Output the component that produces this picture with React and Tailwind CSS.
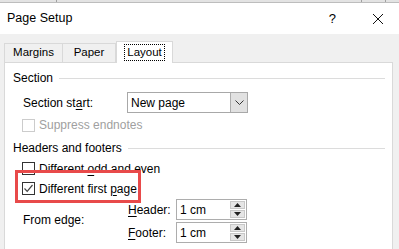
import React from "react";

const U = ({ children }) => <span className="underline underline-offset-2">{children}</span>;

function Check({ checked, disabled }) {
  return (
    <div
      className={
        "w-[13px] h-[13px] border bg-white flex items-center justify-center shrink-0 " +
        (disabled ? "border-[#cccccc]" : "border-[#333333]")
      }
    >
      {checked && (
        <svg width="11" height="11" viewBox="0 0 11 11">
          <path d="M1.5 5.5 L4.2 8.3 L9.5 2" fill="none" stroke="#444" strokeWidth="1.2" />
        </svg>
      )}
    </div>
  );
}

function Spin() {
  return (
    <div className="flex flex-col gap-[1px] mr-[1px]">
      <div className="w-[15px] h-[8px] bg-[#e5e5e5] border border-[#c8c8c8] flex items-center justify-center">
        <svg width="7" height="4" viewBox="0 0 7 4"><path d="M0 4 L3.5 0 L7 4 Z" fill="#222" /></svg>
      </div>
      <div className="w-[15px] h-[8px] bg-[#e5e5e5] border border-[#c8c8c8] flex items-center justify-center">
        <svg width="7" height="4" viewBox="0 0 7 4"><path d="M0 0 L3.5 4 L7 0 Z" fill="#222" /></svg>
      </div>
    </div>
  );
}

function SpinInput({ value }) {
  return (
    <div className="w-[71px] h-[21px] border border-[#adadad] bg-white flex items-center justify-between pl-[3px]">
      <span>{value}</span>
      <Spin />
    </div>
  );
}

export default function App() {
  return (
    <div
      className="w-[399px] h-[249px] overflow-hidden bg-[#f0f0f0] relative text-[12px] text-black leading-none"
      style={{ fontFamily: '"Liberation Sans", Arial, sans-serif' }}
    >
      {/* top strip */}
      <div className="h-[3px] bg-[#e3e3e3] border-b border-[#bdbdbd] flex">
        <div className="w-[57px] border-r border-[#a0a0a0]" />
        <div className="w-[305px] border-r border-[#a0a0a0]" />
        <div className="w-[24px] border-r border-[#a0a0a0]" />
      </div>
      {/* title bar */}
      <div className="h-[31px] bg-white flex items-center pl-[7px]">
        <span className="text-[12.5px]">Page Setup</span>
        <span className="ml-auto text-[13px] mr-[36px]">?</span>
        <svg width="12" height="12" viewBox="0 0 12 12" className="mr-[15px]">
          <path d="M1 1 L11 11 M11 1 L1 11" stroke="#111" strokeWidth="1" />
        </svg>
      </div>
      {/* tabs */}
      <div className="h-[28px] flex items-end pl-[4px] relative z-10">
        <div className="w-[59px] h-[19px] border border-b-0 border-[#d9d9d9] bg-[#f0f0f0] flex items-center justify-center text-[11.5px]">
          Margins
        </div>
        <div className="w-[53px] h-[19px] border border-b-0 border-l-0 border-[#d9d9d9] bg-[#f0f0f0] flex items-center justify-center text-[11.5px]">
          Paper
        </div>
        <div className="w-[57px] h-[22px] -mb-[1px] border border-b-0 border-[#d9d9d9] bg-white flex items-center justify-center text-[11.5px]">
          <span className="border border-dotted border-black px-[2px] py-[2px]">Layout</span>
        </div>
      </div>
      {/* panel */}
      <div className="ml-[4px] w-[389px] h-[200px] bg-white border border-[#d9d9d9] relative">
        <div className="flex items-center h-[16px] mt-[7px] pl-[8px] pr-[7px]">
          <span>Section</span>
          <div className="flex-1 h-[1px] bg-[#dcdcdc] ml-[6px]" />
        </div>
        <div className="flex items-center h-[21px] mt-[6px] pl-[18px]">
          <span className="w-[104px]">Section st<U>a</U>rt:</span>
          <div className="w-[121px] h-[21px] border border-[#a8a8a8] bg-white flex">
            <span className="flex-1 pl-[3px] flex items-center">New page</span>
            <div className="w-[17px] h-full bg-[#e1e1e1] border-l border-[#adadad] flex items-center justify-center">
              <svg width="9" height="5" viewBox="0 0 9 5"><path d="M0.5 0.5 L4.5 4.5 L8.5 0.5" fill="none" stroke="#333" strokeWidth="1" /></svg>
            </div>
          </div>
        </div>
        <div className="flex items-center h-[14px] mt-[5px] pl-[17px] gap-[4px]">
          <Check disabled />
          <span className="text-[#a0a0a0]">Suppress endnotes</span>
        </div>
        <div className="flex items-center h-[16px] mt-[8px] pl-[8px] pr-[7px]">
          <span>Headers and footers</span>
          <div className="flex-1 h-[1px] bg-[#dcdcdc] ml-[6px]" />
        </div>
        <div className="flex items-center h-[13px] mt-[6px] pl-[17px] gap-[4px]">
          <Check />
          <span>Different <U>o</U>dd and even</span>
        </div>
        <div className="flex items-center h-[13px] mt-[7px] pl-[17px] gap-[4px]">
          <Check checked />
          <span>Different first <U>p</U>age</span>
        </div>
        <div className="flex mt-[4px] pl-[18px]">
          <div className="w-[105px] flex items-end h-[27px]">From edge:</div>
          <div className="flex flex-col gap-[2px]">
            <div className="flex items-center h-[21px]">
              <span className="w-[48px]"><U>H</U>eader:</span>
              <SpinInput value="1 cm" />
            </div>
            <div className="flex items-center h-[21px]">
              <span className="w-[48px]"><U>F</U>ooter:</span>
              <SpinInput value="1 cm" />
            </div>
          </div>
        </div>
        {/* red highlight */}
        <div className="absolute left-[10px] top-[107px] w-[126px] h-[33px] border-[3px] border-[#e84a4a]" />
      </div>
    </div>
  );
}
